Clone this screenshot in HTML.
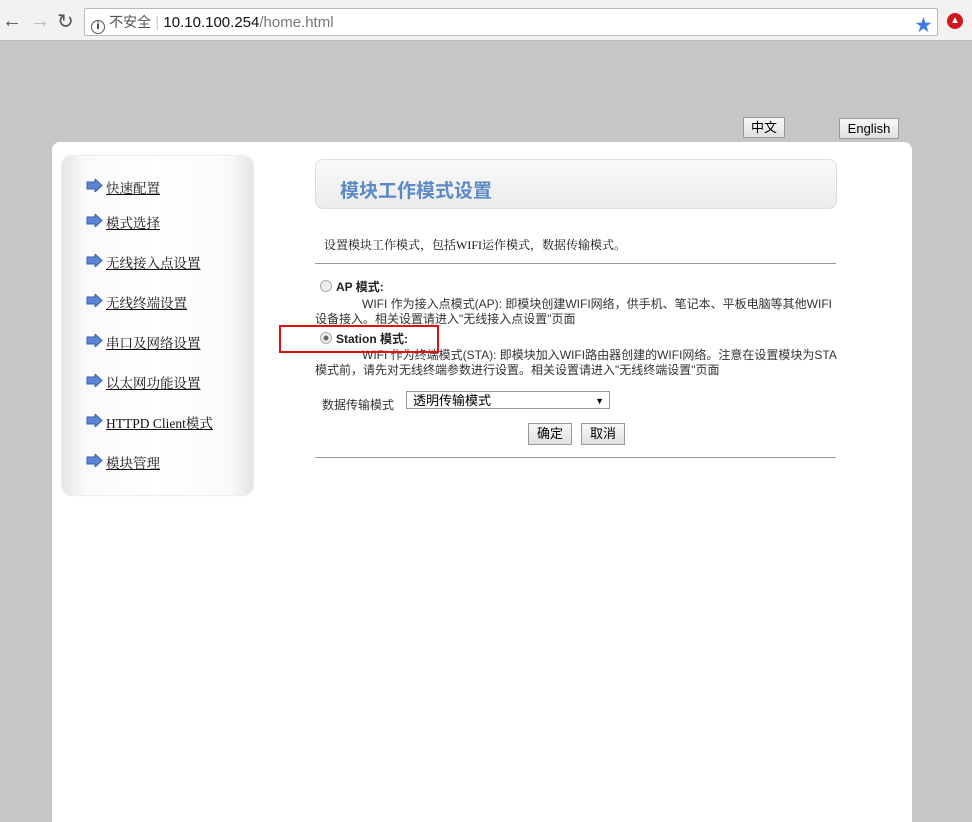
<!DOCTYPE html><html><head><meta charset="utf-8"><style>
body{margin:0;width:972px;height:803px;overflow:hidden;background:#c6c6c6;font-family:"Liberation Sans","Noto Sans CJK SC",sans-serif;position:relative}
.a{position:absolute}
.tb{left:0;top:0;width:972px;height:40px;background:#f2f2f2;border-bottom:1px solid #bbb}
.tabs{left:0;top:0;width:972px;height:4px;background:#9aa0a8}
.addr{left:84px;top:8px;width:852px;height:26px;background:#fff;border:1px solid #b9b9b9;border-radius:2px;font-size:15px;line-height:26px}
.panel{left:52px;top:142px;width:860px;height:680px;background:#fff;border-radius:8px 8px 0 0}
.side{left:62px;top:156px;width:191px;height:339px;border-radius:10px;background:linear-gradient(90deg,#e4e4e4,#fafafa 12%,#fff 50%,#fafafa 88%,#e4e4e4);box-shadow:0 0 2px #ccc}
.side a{position:absolute;left:44px;font-size:13.5px;color:#111;text-decoration:underline;font-family:"Liberation Serif","Noto Serif CJK SC",serif}
.arr{position:absolute;left:24px;width:17px;height:13px}
.hd{left:315px;top:159px;width:520px;height:48px;border:1px solid #ddd;border-radius:8px;background:linear-gradient(#fafafa,#ececec)}
.btn{background:linear-gradient(#f8f8f8,#e0e0e0);border:1px solid #999;font-size:13px;text-align:center;line-height:19px;height:19px}
.t{font-size:12px;color:#333}
</style></head><body>
<div class="a tabs"></div>
<div class="a tb"></div>
<div class="a" style="left:2px;top:10px;font-size:20px;color:#555">&#8592;</div>
<div class="a" style="left:30px;top:10px;font-size:20px;color:#bbb">&#8594;</div>
<div class="a" style="left:57px;top:9px;font-size:20px;color:#555">&#8635;</div>
<div class="a addr"><span style="margin-left:6px;display:inline-block;width:12px;height:12px;border:1.5px solid #555;border-radius:50%;font-size:10px;line-height:12px;text-align:center;vertical-align:-2px;font-weight:bold">i</span> <span style="color:#555;font-size:14px">不安全</span> <span style="color:#ccc">|</span> <span style="color:#111">10.10.100.254</span><span style="color:#777">/home.html</span></div>
<div class="a" style="left:915px;top:11px;color:#3b7ce6;font-size:17px">&#9733;</div>
<div class="a" style="left:947px;top:13px;width:16px;height:16px;border-radius:50%;background:#d0171d;color:#fff;font-size:10px;text-align:center;line-height:16px">&#9650;</div>
<div class="a btn" style="left:743px;top:117px;width:40px">中文</div>
<div class="a btn" style="left:839px;top:118px;width:58px">English</div>
<div class="a panel"></div>
<div class="a side">
<svg class="arr" style="top:23px" viewBox="0 0 17 13"><path d="M1 3h8V0l7 6.5-7 6.5V10H1z" fill="#5b86d6" stroke="#3a5fa8"/></svg><a style="top:21px">快速配置</a>
<svg class="arr" style="top:58px" viewBox="0 0 17 13"><path d="M1 3h8V0l7 6.5-7 6.5V10H1z" fill="#5b86d6" stroke="#3a5fa8"/></svg><a style="top:56px">模式选择</a>
<svg class="arr" style="top:98px" viewBox="0 0 17 13"><path d="M1 3h8V0l7 6.5-7 6.5V10H1z" fill="#5b86d6" stroke="#3a5fa8"/></svg><a style="top:96px">无线接入点设置</a>
<svg class="arr" style="top:138px" viewBox="0 0 17 13"><path d="M1 3h8V0l7 6.5-7 6.5V10H1z" fill="#5b86d6" stroke="#3a5fa8"/></svg><a style="top:136px">无线终端设置</a>
<svg class="arr" style="top:178px" viewBox="0 0 17 13"><path d="M1 3h8V0l7 6.5-7 6.5V10H1z" fill="#5b86d6" stroke="#3a5fa8"/></svg><a style="top:176px">串口及网络设置</a>
<svg class="arr" style="top:218px" viewBox="0 0 17 13"><path d="M1 3h8V0l7 6.5-7 6.5V10H1z" fill="#5b86d6" stroke="#3a5fa8"/></svg><a style="top:216px">以太网功能设置</a>
<svg class="arr" style="top:258px" viewBox="0 0 17 13"><path d="M1 3h8V0l7 6.5-7 6.5V10H1z" fill="#5b86d6" stroke="#3a5fa8"/></svg><a style="top:256px">HTTPD Client模式</a>
<svg class="arr" style="top:298px" viewBox="0 0 17 13"><path d="M1 3h8V0l7 6.5-7 6.5V10H1z" fill="#5b86d6" stroke="#3a5fa8"/></svg><a style="top:296px">模块管理</a>
</div>
<div class="a hd"><div style="position:absolute;left:24px;top:16px;font-size:19px;font-weight:bold;color:#5b8ac4">模块工作模式设置</div></div>
<div class="a t" style="left:324px;top:236px;font-family:'Liberation Serif','Noto Serif CJK SC',serif;color:#111">设置模块工作模式，包括WIFI运作模式，数据传输模式。</div>
<div class="a" style="left:315px;top:263px;width:521px;height:1px;background:#999"></div>
<div class="a" style="left:320px;top:280px;width:10px;height:10px;border-radius:50%;border:1px solid #aaa;background:#eee"></div>
<div class="a t" style="left:336px;top:278px;font-weight:bold;color:#222">AP 模式:</div>
<div class="a t" style="left:315px;top:297px;width:525px;line-height:15px;text-indent:47px">WIFI 作为接入点模式(AP): 即模块创建WIFI网络，供手机、笔记本、平板电脑等其他WIFI设备接入。相关设置请进入"无线接入点设置"页面</div>
<div class="a" style="left:320px;top:332px;width:10px;height:10px;border-radius:50%;border:1px solid #aaa;background:radial-gradient(#666 30%,#eee 40%)"></div>
<div class="a t" style="left:336px;top:330px;font-weight:bold;color:#222">Station 模式:</div>
<div class="a t" style="left:315px;top:348px;width:525px;line-height:15px;text-indent:47px">WIFI 作为终端模式(STA): 即模块加入WIFI路由器创建的WIFI网络。注意在设置模块为STA模式前，请先对无线终端参数进行设置。相关设置请进入"无线终端设置"页面</div>
<div class="a" style="left:279px;top:325px;width:156px;height:24px;border:2px solid #e01010"></div>
<div class="a t" style="left:322px;top:396px">数据传输模式</div>
<div class="a" style="left:406px;top:391px;height:18px;border:1px solid #999;background:#fff;font-size:13px;line-height:18px;padding-left:6px;box-sizing:border-box;width:204px">透明传输模式<span style="position:absolute;right:5px;font-size:9px">&#9660;</span></div>
<div class="a btn" style="left:528px;top:423px;width:42px;height:20px">确定</div>
<div class="a btn" style="left:581px;top:423px;width:42px;height:20px">取消</div>
<div class="a" style="left:315px;top:457px;width:521px;height:1px;background:#999"></div>
</body></html>
